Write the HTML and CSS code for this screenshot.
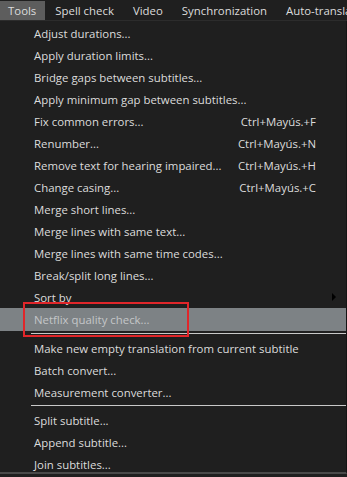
FILE: index.html
```html
<!DOCTYPE html>
<html lang="en">
<head>
  <meta charset="UTF-8" />
  <title>Tools menu</title>
  <link rel="stylesheet" href="styles.css">
</head>
<body>
  <div class="menubar">
    <span class="top active">Tools</span>
    <span class="top">Spell check</span>
    <span class="top">Video</span>
    <span class="top">Synchronization</span>
    <span class="top">Auto-translate</span>
  </div>

  <div class="menu">
    <div class="item"><span>Adjust durations...</span></div>
    <div class="item"><span>Apply duration limits...</span></div>
    <div class="item"><span>Bridge gaps between subtitles...</span></div>
    <div class="item"><span>Apply minimum gap between subtitles...</span></div>
    <div class="item"><span>Fix common errors...</span><span class="key">Ctrl+Mayús.+F</span></div>
    <div class="item"><span>Renumber...</span><span class="key">Ctrl+Mayús.+N</span></div>
    <div class="item"><span>Remove text for hearing impaired...</span><span class="key">Ctrl+Mayús.+H</span></div>
    <div class="item"><span>Change casing...</span><span class="key">Ctrl+Mayús.+C</span></div>
    <div class="item"><span>Merge short lines...</span></div>
    <div class="item"><span>Merge lines with same text...</span></div>
    <div class="item"><span>Merge lines with same time codes...</span></div>
    <div class="item"><span>Break/split long lines...</span></div>
    <div class="item"><span>Sort by</span><span class="arrow"></span></div>
    <div class="item hover"><span>Netflix quality check...</span><span class="mark"></span></div>
    <div class="sep"></div>
    <div class="item"><span>Make new empty translation from current subtitle</span></div>
    <div class="item"><span>Batch convert...</span></div>
    <div class="item"><span>Measurement converter...</span></div>
    <div class="sep"></div>
    <div class="item"><span>Split subtitle...</span></div>
    <div class="item"><span>Append subtitle...</span></div>
    <div class="item"><span>Join subtitles...</span></div>
  </div>
</body>
</html>
```

FILE: styles.css
```css
body {
  margin: 0;
  background: #1f1f1f;
  color: #dcdcdc;
  font-family: "Open Sans", "Noto Sans", Arial, sans-serif;
  font-size: 11.4px;
  overflow: hidden;
  width: 347px;
  height: 477px;
}

.menubar {
  display: flex;
  height: 21px;
  padding-top: 1px;
  box-sizing: border-box;
  background: #1f1f1f;
  border-bottom: 1px solid #2c2c2c;
  white-space: nowrap;
  overflow: hidden;
}

.top {
  padding: 0 9px 0 8px;
  line-height: 19px;
  margin-right: 2px;
}

.active {
  background: #5d5d5d;
}

.menu {
  position: relative;
  padding-top: 1px;
  border-right: 1px solid #141414;
  border-bottom: 2px solid #4a4a4a;
  height: 453px;
  box-sizing: border-box;
}

.item {
  position: relative;
  display: flex;
  justify-content: space-between;
  align-items: center;
  height: 22px;
  padding: 0 30px 0 34px;
  white-space: nowrap;
}

.key {
  text-align: right;
}

.arrow {
  position: absolute;
  right: 10px;
  top: 7px;
  border-left: 4px solid #000;
  border-top: 4px solid transparent;
  border-bottom: 4px solid transparent;
}

.hover {
  background: #7d8285;
  color: #c4c6c8;
  height: 23px;
}

.mark {
  position: absolute;
  left: 23px;
  top: -6px;
  width: 162px;
  height: 31px;
  border: 2px solid #e0262a;
}

.sep {
  height: 1px;
  margin: 2px 0 3px 31px;
  background: #c8c8c8;
}
```
